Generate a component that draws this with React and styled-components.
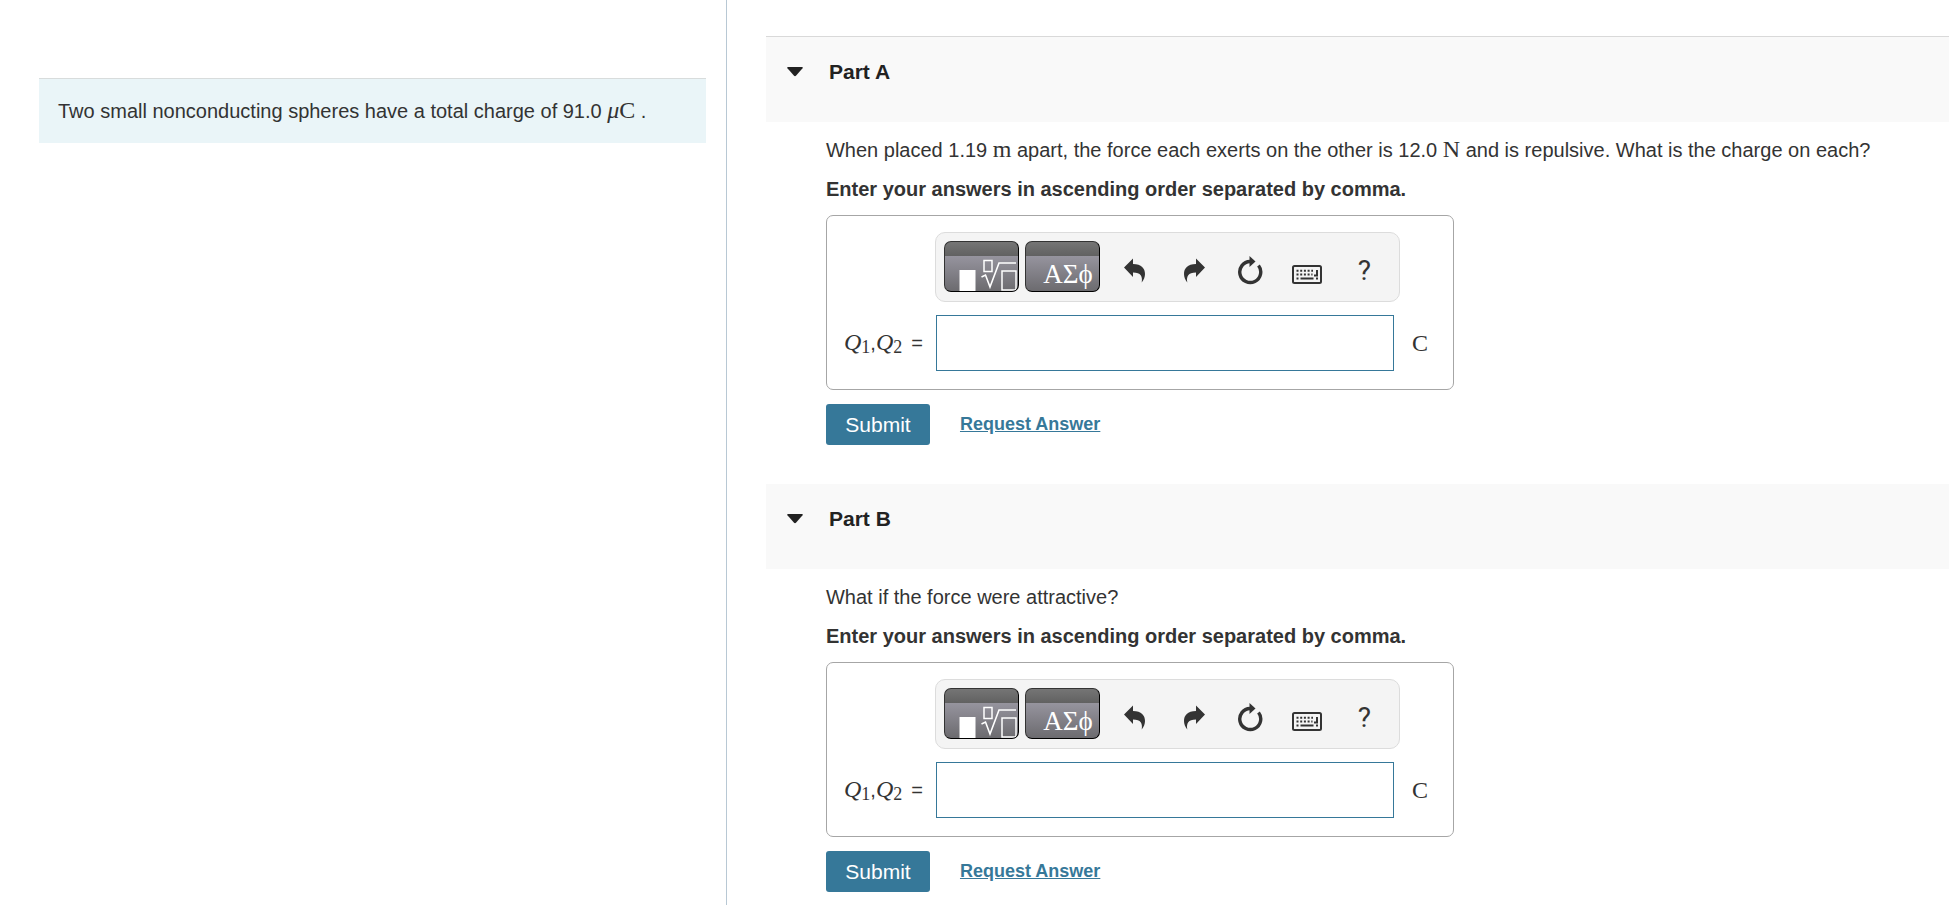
import React, { useState } from 'react';

import styled, { createGlobalStyle } from "styled-components"

const GlobalStyle = createGlobalStyle`
* {
    box-sizing: border-box;
}
body {
    margin: 0;
    background-color: #fff;
    color: #333;
    font-family: Arial, "Liberation Sans", sans-serif;
    font-size: 20px;
    line-height: 24px;
}
`
const Page = styled.div`
display: flex;
min-height: 100vh;
`
const Sidebar = styled.aside`
flex: 0 0 37.3%;
padding: 78px 20px 0 39px;
border-right: 1px solid #b8c8d4;
`
const Intro = styled.p`
margin: 0;
padding: 20px 19px;
border-top: 1px solid #d8dcdc;
background-color: #eaf5f8;
`
const Main = styled.main`
display: flex;
flex: 1;
flex-direction: column;
gap: 39px;
min-width: 0;
padding: 36px 0 0 39px;
`
const PartHeader = styled.h2`
margin: 0;
height: ${props => props.$first ? "86px" : "85px"};
padding-top: 23px;
border-top: ${props => props.$first ? "1px solid #d9d9d9" : "none"};
background-color: #f9f9f9;
font-size: 21px;
`
const PartToggle = styled.button`
display: flex;
align-items: center;
gap: 26px;
padding: 0 0 0 21px;
border: none;
background: none;
color: #222;
font: inherit;
line-height: 24px;
cursor: pointer;
`
const PartBody = styled.div`
padding: 16px 20px 0 60px;
`
const Question = styled.p`
margin: 0 0 15px;
`
const Instruction = styled.p`
margin: 0 0 14px;
font-weight: bold;
`
const MathText = styled.span`
font-family: "Liberation Serif", "Times New Roman", serif;
font-size: 24px;
line-height: 0;
font-style: ${props => props.$italic ? "italic" : "normal"};
`
const Sub = styled.sub`
font-size: 18px;
font-style: normal;
line-height: 0;
vertical-align: -3px;
`
const AnswerBox = styled.div`
display: grid;
grid-template-columns: 91px 459px auto;
row-gap: 13px;
align-items: center;
width: 628px;
padding: 16px 16px 18px 17px;
border: 1px solid #a6a6a6;
border-radius: 7px;
`
const Toolbar = styled.div`
display: flex;
grid-column: 2 / -1;
align-items: flex-start;
width: 465px;
height: 70px;
padding: 8px 0 8px 8px;
border: 1px solid #dcdcdc;
border-radius: 10px;
background-color: #f4f4f4;
`
const PaletteButton = styled.button`
flex: none;
width: 75px;
height: 51px;
margin-right: 6px;
padding: 0;
overflow: hidden;
border: 1px solid #333;
border-right: 1px solid #000;
border-bottom: 1px solid #000;
border-radius: 7px;
background: linear-gradient(#757575, #616161 14px, #96949e 14px, #6c6b6f);
color: #fff;
font-family: "Liberation Serif", "Times New Roman", serif;
font-size: 27px;
line-height: 30px;
cursor: pointer;
`
const Letters = styled.span`
display: block;
padding: 15px 3px 0 14px;
`
const Tools = styled.div`
display: flex;
padding-left: 2px;
`
const ToolButton = styled.button`
display: flex;
flex: none;
align-items: center;
justify-content: center;
width: 57px;
height: 51px;
padding: 8px 0 0;
border: none;
background: none;
color: #333;
font-family: Roboto, sans-serif;
font-size: 28px;
cursor: pointer;
`
const AnswerLabel = styled.label`
display: flex;
gap: 9px;
white-space: nowrap;
`
const AnswerInput = styled.input`
height: 56px;
margin-left: 1px;
padding: 0 12px;
border: 1px solid #367899;
border-radius: 0;
font: inherit;
`
const Unit = styled(MathText)`
padding-left: 18px;
`
const Actions = styled.div`
display: flex;
align-items: center;
gap: 30px;
margin-top: 14px;
`
const SubmitButton = styled.button`
width: 104px;
height: 41px;
padding: 0;
border: none;
border-radius: 3px;
background-color: #367899;
color: #fff;
font-family: inherit;
font-size: 21px;
cursor: pointer;
`
const RequestLink = styled.a`
padding-bottom: 2px;
color: #367899;
font-size: 18px;
font-weight: bold;
`

const CaretIcon = () => (
    <svg width="16" height="10" viewBox="0 0 15 10" preserveAspectRatio="none" fill="currentColor" aria-hidden="true">
        <path d="M1 0h13q1.500 0 .6 1.200L8.600 8.600q-1.100 1.100-2.200 0L.4 1.200Q-.5 0 1 0z" />
    </svg>
)

const TemplateIcon = () => (
    <svg width="73" height="49" viewBox="0 0 73 49" fill="none" stroke="#fff" aria-hidden="true">
        <path d="M14.500 28h16v21h-16z" fill="#fff" stroke="none" />
        <path d="M39 18.500h8v11h-8z" strokeWidth="1.500" />
        <path d="M36.500 35l4-2 4.500 12 9-24h17" strokeWidth="1.600" />
        <path d="M57 29h14v19H57z" strokeWidth="1.500" />
    </svg>
)

const UndoIcon = ({ flip }) => (
    <svg width="24" height="25" viewBox="0 0 24 25" fill="currentColor" aria-hidden="true">
        <path
            d="M0 9.500L9 .5v5.500c8.500 0 12 4.500 12 10 0 3.200-1.200 6-3.300 8.500 1-6-.7-10-8.700-10v4.500z"
            transform={flip ? "matrix(-1 0 0 1 24 0)" : undefined}
        />
    </svg>
)

const ResetIcon = () => (
    <svg width="26" height="30" viewBox="0 0 26 30" fill="none" aria-hidden="true">
        <path d="M13 5.500A10.500 10.500 0 1 0 21.500 9.500" stroke="currentColor" strokeWidth="3.400" />
        <path d="M12.500 0l6 5.500-6 5.500z" fill="currentColor" />
    </svg>
)

const KeyboardIcon = () => (
    <svg width="30" height="26" viewBox="0 0 30 26" fill="none" stroke="currentColor" aria-hidden="true">
        <rect x="1" y="8" width="28" height="17" rx="1.500" strokeWidth="2" />
        <path d="M4.500 12.800h16.500M4.500 16.500h16M4.500 20.500h2M24 20.500h2" strokeWidth="2" strokeDasharray="2 1.700" />
        <path d="M8.500 20.500h13M25 12v5.500h-3" strokeWidth="2" />
    </svg>
)

const AnswerForm = ({ id }) => (
    <form onSubmit={e => e.preventDefault()}>
        <AnswerBox>
            <Toolbar role="toolbar" aria-label="Equation tools">
                <PaletteButton type="button" aria-label="Templates"><TemplateIcon /></PaletteButton>
                <PaletteButton type="button" aria-label="Symbols"><Letters>ΑΣϕ</Letters></PaletteButton>
                <Tools>
                    <ToolButton type="button" aria-label="Undo"><UndoIcon /></ToolButton>
                    <ToolButton type="button" aria-label="Redo"><UndoIcon flip /></ToolButton>
                    <ToolButton type="button" aria-label="Reset"><ResetIcon /></ToolButton>
                    <ToolButton type="button" aria-label="Keyboard shortcuts"><KeyboardIcon /></ToolButton>
                    <ToolButton type="button" aria-label="Help">?</ToolButton>
                </Tools>
            </Toolbar>
            <AnswerLabel htmlFor={id}>
                <span>
                    <MathText $italic>Q<Sub>1</Sub></MathText>,<MathText $italic>Q<Sub>2</Sub></MathText>
                </span>
                <span>=</span>
            </AnswerLabel>
            <AnswerInput id={id} type="text" />
            <Unit>C</Unit>
        </AnswerBox>
        <Actions>
            <SubmitButton type="submit">Submit</SubmitButton>
            <RequestLink href="#request">Request Answer</RequestLink>
        </Actions>
    </form>
)

const Part = ({ id, title, first, children }) => {
    const [open, setOpen] = useState(true)

    return (
        <section>
            <PartHeader $first={first}>
                <PartToggle type="button" aria-expanded={open} onClick={() => setOpen(!open)}>
                    <CaretIcon />
                    {title}
                </PartToggle>
            </PartHeader>
            {open && (
                <PartBody>
                    <Question>{children}</Question>
                    <Instruction>Enter your answers in ascending order separated by comma.</Instruction>
                    <AnswerForm id={id} />
                </PartBody>
            )}
        </section>
    )
}

const App = () => (
    <Page>
        <GlobalStyle />
        <Sidebar>
            <Intro>
                Two small nonconducting spheres have a total charge of 91.0 <MathText><i>μ</i>C</MathText> .
            </Intro>
        </Sidebar>
        <Main>
            <Part id="answer-a" title="Part A" first>
                When placed 1.19 <MathText>m</MathText> apart, the force each exerts on the other is 12.0 <MathText>N</MathText> and is repulsive. What is the charge on each?
            </Part>
            <Part id="answer-b" title="Part B">
                What if the force were attractive?
            </Part>
        </Main>
    </Page>
)

export default App
